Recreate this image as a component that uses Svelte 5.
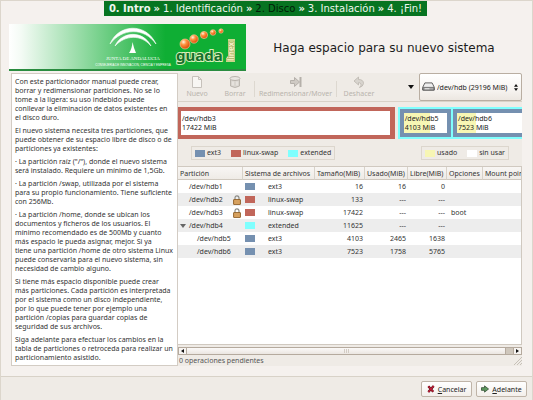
<script>
  const steps = [
    { label: '0. Intro', kind: 'first' },
    { label: '1. Identificación', kind: '' },
    { label: '2. Disco', kind: 'current' },
    { label: '3. Instalación', kind: '' },
    { label: '4. ¡Fin!', kind: '' }
  ];

  const help = [
    ['Con este particionador manual puede crear,', 'borrar y redimensionar particiones. No se lo', 'tome a la ligera: su uso indebido puede', 'conllevar la eliminación de datos existentes en', 'el disco duro.'],
    ['El nuevo sistema necesita tres particiones, que', 'puede obtener de su espacio libre de disco o de', 'particiones ya existentes:'],
    ['· La partición raíz ("/"), donde el nuevo sistema', 'será instalado. Requiere un mínimo de 1,5Gb.'],
    ['· La partición /swap, utilizada por el sistema', 'para su propio funcionamiento. Tiene suficiente', 'con 256Mb.'],
    ['· La partición /home, donde se ubican los', 'documentos y ficheros de los usuarios. El', 'mínimo recomendado es de 500Mb y cuanto', 'más espacio le pueda asignar, mejor. Si ya', 'tiene una partición /home de otro sistema Linux', 'puede conservarla para el nuevo sistema, sin', 'necesidad de cambio alguno.'],
    ['Si tiene más espacio disponible puede crear', 'más particiones. Cada partición es interpretada', 'por el sistema como un disco independiente,', 'por lo que puede tener por ejemplo una', 'partición /copias para guardar copias de', 'seguridad de sus archivos.'],
    ['Siga adelante para efectuar los cambios en la', 'tabla de particiones o retroceda para realizar un', 'particionamiento asistido.']
  ];

  const rows = [
    { dev: '/dev/hdb1', fs: 'ext3', size: '16', used: '16', free: '0' },
    { dev: '/dev/hdb2', fs: 'linux-swap', size: '133', used: '---', free: '---', locked: true },
    { dev: '/dev/hdb3', fs: 'linux-swap', size: '17422', used: '---', free: '---', locked: true, opt: 'boot' },
    { dev: '/dev/hdb4', fs: 'extended', size: '11625', used: '---', free: '---', open: true },
    { dev: '/dev/hdb5', fs: 'ext3', size: '4103', used: '2465', free: '1638', child: true },
    { dev: '/dev/hdb6', fs: 'ext3', size: '7523', used: '1758', free: '5765', child: true }
  ];

  const beads = [
    [10, 19, 5], [19, 14, 4.2], [29, 10, 3.6], [38, 7.500, 2.800], [46, 6, 2.200]
  ];
</script>

<div class="window">
  <main>
    <nav class="steps">
      {#each steps as step, i}
        <span class={step.kind}>{step.label}</span>{#if i < steps.length - 1}<span class="first">»</span>{/if}
      {/each}
    </nav>

    <header>
      <div class="banner">
        <svg class="junta" viewBox="0 0 74 42" role="img" aria-label="Junta de Andalucía">
          <path d="M14 19 C22 -1 50 -3 60 19 C48 2 26 3 14 19Z" fill="#fff" stroke="#fff" stroke-width=".6" />
          <path d="M19 21 C26 6 47 5 55 21 C45 9 29 10 19 21Z" fill="#fff" stroke="#fff" stroke-width=".6" />
          <path d="M36.500 17 Q38 24 40 28 H33 Q36 24 36.500 17Z" fill="#fff" />
          <text x="37" y="35" text-anchor="middle" class="serif">JUNTA DE ANDALUCIA</text>
          <text x="37" y="41" text-anchor="middle" class="tiny">CONSEJERIA DE INNOVACION, CIENCIA Y EMPRESA</text>
        </svg>
        <svg class="guada" viewBox="0 0 62 44" role="img" aria-label="guadalinex">
          <defs>
            <radialGradient id="bead" cx="35%" cy="30%" r="70%">
              <stop offset="0" stop-color="#fff3df" />
              <stop offset="0.400" stop-color="#ff9440" />
              <stop offset="1" stop-color="#dc4a08" />
            </radialGradient>
          </defs>
          {#each beads as [x, y, r]}
            <circle cx={x} cy={y} r={r} fill="url(#bead)" stroke="#ffd1a0" stroke-width="0.600" />
          {/each}
          <text x="1" y="36" class="word">guada</text>
          <rect x="53" y="14" width="7" height="22" fill="#c9d68b" />
          <rect x="51" y="33" width="9" height="4" fill="#c9d68b" />
          <text class="linex" transform="translate(59 36) rotate(-90)">linex</text>
        </svg>
      </div>
      <h1>Haga espacio para su nuevo sistema</h1>
    </header>

    <div class="content">
      <section class="help">
        {#each help as lines}
          <p>{#each lines as line}{line}<br />{/each}</p>
        {/each}
      </section>

      <section class="editor">
        <div class="toolbar">
          <button class="tool nuevo" disabled>
            <svg viewBox="0 0 12 12"><path d="M1.500 .500h6l3 3v8h-9z M7.500 .500v3h3" fill="#f8f6f3" stroke="#c6c1bb" /></svg>
            Nuevo
          </button>
          <button class="tool borrar" disabled>
            <svg viewBox="0 0 12 12"><path d="M1.500 3v7q4.500 3 9 0V3" fill="#d9d5cf" stroke="#bbb6af" /><ellipse cx="6" cy="2.500" rx="5" ry="2" fill="#e9e6e1" stroke="#b7b2ab" /><path d="M4 5.500v4M8 5.500v4" stroke="#f2efeb" /></svg>
            Borrar
          </button>
          <i class="rule"></i>
          <button class="tool mover" disabled>
            <svg viewBox="0 0 12 12"><path d="M.500 4.500h4v-3l5 4.500-5 4.500v-3h-4z" fill="#cfcac4" stroke="#b5b0aa" /><path d="M10.500 1v10" stroke="#b5b0aa" stroke-width="2" /></svg>
            Redimensionar/Mover
          </button>
          <i class="rule"></i>
          <button class="tool deshacer" disabled>
            <svg viewBox="0 0 12 12"><path d="M1 5 5.500 1v2.500q5 0 5 4-.500 3-4 4 2-2 1.500-3.500-.500-1.500-2.500-1.300V9z" fill="#d8d4ce" stroke="#bbb6af" stroke-width=".8" /></svg>
            Deshacer
          </button>
          <button class="more" aria-label="Más herramientas"><svg viewBox="0 0 6 4"><path d="M0 0h6L3 4z" fill="#111" /></svg></button>
          <div class="device">
            <svg class="disk" viewBox="0 0 14 10"><path d="M3 1h8l2.500 5v3h-13V6z" fill="#eee" stroke="#555" stroke-linejoin="round" /><path d="M1 6h12v3H1z" fill="#aaa" stroke="#555" stroke-width=".8" /><path d="M3 7.500h5" stroke="#eee" /></svg>
            <select aria-label="Dispositivo"><option>/dev/hdb (29196 MiB)</option></select>
            <svg class="updown" viewBox="0 0 4 7"><path d="M0 2.800 2 0l2 2.800zM0 4.200 2 7l2-2.800z" fill="#111" /></svg>
          </div>
        </div>

        <div class="map">
          <div class="part swap"><span>/dev/hdb3<br />17422 MiB</span></div>
          <div class="extended">
            <div class="part five"><span>/dev/hdb5<br />4103 MiB</span></div>
            <div class="part six"><span>/dev/hdb6<br />7523 MiB</span></div>
          </div>
        </div>

        <div class="legends">
          <div class="legend">
            <span><i class="sw ext3"></i>ext3</span>
            <span><i class="sw linux-swap"></i>linux-swap</span>
            <span><i class="sw extended-fs"></i>extended</span>
          </div>
          <div class="legend">
            <span><i class="sw used"></i>usado</span>
            <span><i class="sw unused"></i>sin usar</span>
          </div>
        </div>

        <div class="list">
          <table>
            <colgroup>
              <col class="c1" /><col class="c2" /><col class="c3" /><col class="c4" /><col class="c5" /><col class="c6" /><col />
            </colgroup>
            <thead>
              <tr><th>Partición</th><th>Sistema de archivos</th><th>Tamaño(MiB)</th><th>Usado(MiB)</th><th>Libre(MiB)</th><th>Opciones</th><th>Mount point</th></tr>
            </thead>
            <tbody>
              {#each rows as row}
                <tr>
                  <td>
                    <div class="dev" class:child={row.child}>
                      <span class="twist">{#if row.open}<svg viewBox="0 0 6 4"><path d="M0 0h6L3 4z" fill="#666" /></svg>{/if}</span>
                      <span class="name">{row.dev}</span>
                      {#if row.locked}
                        <svg class="lock" viewBox="0 0 8 10"><path d="M2 5V3q0-2.200 2-2.200T6 3v2" fill="none" stroke="#8b8b86" stroke-width="1.200" /><rect x=".5" y="4.500" width="7" height="5" rx=".5" fill="#cf9650" stroke="#8a5a22" stroke-width=".8" /><path d="M1.500 6h5M1.500 8h5" stroke="#e8be83" stroke-width=".6" /></svg>
                      {/if}
                    </div>
                  </td>
                  <td><div class="fs"><i class="sw {row.fs === 'extended' ? 'extended-fs' : row.fs}"></i>{row.fs}</div></td>
                  <td class="num">{row.size}</td>
                  <td class="num">{row.used}</td>
                  <td class="num">{row.free}</td>
                  <td class="opt">{row.opt ?? ''}</td>
                  <td></td>
                </tr>
              {/each}
            </tbody>
          </table>
        </div>

        <div class="scroll">
          <button aria-label="Desplazar a la izquierda"><svg viewBox="0 0 3 4"><path d="M3 0v4L0 2z" fill="#111" /></svg></button>
          <div class="thumb"><i></i><i></i><i></i></div>
          <div class="trough"></div>
          <button aria-label="Desplazar a la derecha"><svg viewBox="0 0 3 4"><path d="M0 0v4l3-2z" fill="#111" /></svg></button>
        </div>
        <div class="status">
          0 operaciones pendientes
          <svg viewBox="0 0 8 8"><path d="M0 8 8 0M3 8l5-5M6 8l2-2" stroke="#bdb6ac" stroke-width=".8" /></svg>
        </div>
      </section>
    </div>
  </main>

  <footer>
    <button>
      <svg viewBox="0 0 9 9"><path d="M1.500 1.500 7 7.500M7.500 1 1.500 8" stroke="#5a0a14" stroke-width="2.600" /><path d="M1.500 1.500 7 7.500M7.500 1 1.500 8" stroke="#c3203a" stroke-width="1.400" /></svg>
      <span><u>C</u>ancelar</span>
    </button>
    <button>
      <svg viewBox="0 0 9 9"><path d="M.500 3h3.500V1l4.500 3.500L4 8V6H.500z" fill="#5f9a60" stroke="#2d4a2f" stroke-width=".9" /></svg>
      <span><u>A</u>delante</span>
    </button>
  </footer>
</div>

<style>
  :global(body) {
    margin: 0;
    background: #f5f1ee;
  }
  .window {
    box-sizing: border-box;
    min-height: 100vh;
    display: flex;
    flex-direction: column;
    border: 1px solid #dcd6cc;
    border-bottom: 0;
    background: #f5f1ee;
    color: #333;
    font: 7px/9px 'Noto Sans', 'DejaVu Sans', sans-serif;
    overflow: hidden;
  }
  button,
  select {
    font: inherit;
    color: inherit;
    margin: 0;
    padding: 0;
    border: 0;
    background: none;
  }
  svg {
    display: block;
    flex: none;
    fill: none;
  }
  main {
    flex: 1;
    display: flex;
    flex-direction: column;
    padding: 0 10px 10px 8px;
  }
  .steps {
    align-self: center;
    display: flex;
    gap: 3px;
    padding: 0 5px;
    background: #077421;
    color: #eef6ee;
    font-family: 'DejaVu Sans', sans-serif;
    font-size: 10px;
    line-height: 15px;
    white-space: nowrap;
  }
  .steps .first {
    font-weight: bold;
  }
  .steps .current {
    color: #001c06;
  }
  header {
    display: flex;
    align-items: center;
    margin-top: 8px;
  }
  .banner {
    box-sizing: border-box;
    width: 237px;
    height: 47px;
    flex: none;
    display: flex;
    justify-content: flex-end;
    align-items: flex-start;
    gap: 5px;
    padding: 1px 9px 0 0;
    border-bottom: 2px solid #2a8c40;
    background: linear-gradient(90deg, #fff 0%, #f4fbf5 5%, #0fae34 66%);
  }
  .junta {
    width: 74px;
    height: 42px;
    overflow: visible;
  }
  .guada {
    width: 62px;
    height: 44px;
    overflow: visible;
  }
  .serif {
    font: 5px 'Liberation Serif', serif;
    fill: #fff;
  }
  .tiny {
    font: 3px 'Liberation Sans', sans-serif;
    fill: #fff;
  }
  .word {
    font: bold 15px 'Noto Sans', sans-serif;
    fill: #15722c;
    stroke: #d9efb9;
    stroke-width: 2px;
    paint-order: stroke;
  }
  .linex {
    font: bold 8px 'Noto Sans', sans-serif;
    fill: #f4f0c8;
    stroke: #a8ae60;
    stroke-width: 1px;
    paint-order: stroke;
  }
  h1 {
    flex: 1;
    margin: 0;
    text-align: center;
    font-family: 'DejaVu Sans', sans-serif;
    font-size: 12px;
    line-height: 16px;
    font-weight: normal;
    color: #1c1c1c;
  }
  .content {
    flex: 1;
    display: flex;
    margin: 2px 0 0 2px;
  }
  .help {
    flex: none;
    box-sizing: border-box;
    width: 167px;
    padding: 3px 0 2px 3px;
    border: 1px solid #d3ccc4;
    background: #fff;
    white-space: nowrap;
  }
  .help p {
    margin: 0 0 4px;
  }
  .help p:last-child {
    margin: 0;
  }
  .editor {
    flex: 1;
    min-width: 0;
    display: flex;
    flex-direction: column;
    background: #efebe6;
  }
  .toolbar {
    display: flex;
    height: 28px;
    border-bottom: 1px solid #d8d2c8;
    color: #b9b4ad;
  }
  .tool {
    display: flex;
    flex-direction: column;
    align-items: center;
    justify-content: center;
    gap: 1px;
    flex: none;
    white-space: nowrap;
  }
  .tool svg {
    width: 12px;
    height: 12px;
  }
  .nuevo,
  .borrar {
    width: 38px;
  }
  .mover {
    width: 81px;
  }
  .deshacer {
    width: 44px;
  }
  .rule {
    width: 1px;
    margin: 8px 0 4px;
    background: #ddd8d0;
  }
  .more {
    margin-left: auto;
    padding: 0 5px;
  }
  .more svg {
    width: 6px;
    height: 4px;
  }
  .device {
    position: relative;
    width: 103px;
    flex: none;
  }
  .device select {
    box-sizing: border-box;
    width: 100%;
    height: 28px;
    padding: 0 8px 0 17px;
    border: 1px solid #b9aea2;
    border-radius: 2px;
    appearance: none;
    background: linear-gradient(#fff, #f7f4f1 60%, #ece7e1);
    color: #222;
  }
  .disk {
    position: absolute;
    left: 3px;
    top: 9px;
    width: 13px;
    height: 9px;
  }
  .updown {
    position: absolute;
    right: 4px;
    top: 11px;
    width: 4px;
    height: 7px;
  }
  .map {
    display: flex;
    gap: 3px;
    height: 32px;
    margin-top: 5px;
    overflow: hidden;
    white-space: nowrap;
    color: #222;
  }
  .part {
    box-sizing: border-box;
    display: flex;
    align-items: center;
    border: 4px solid #7590b0;
    background: #fff;
  }
  .part span {
    padding-left: 1px;
  }
  .swap {
    flex: none;
    width: 63%;
    border: 5px solid #c1665a;
    border-width: 4px 5px 4px 3px;
  }
  .extended {
    flex: 1;
    min-width: 0;
    display: flex;
    gap: 2px;
    box-sizing: border-box;
    border: 2px solid #7ffffe;
    border-right: 0;
    background: #7ffffe;
  }
  .five {
    flex: none;
    width: 42%;
    background: linear-gradient(90deg, #f7f6b4 60%, #fff 60%);
  }
  .six {
    flex: 1;
    border-right: 0;
    background: linear-gradient(90deg, #f7f6b4 30%, #fff 30%);
  }
  .legends {
    display: flex;
    justify-content: space-between;
    padding: 7px 13px 6px;
  }
  .legend {
    display: flex;
    gap: 10px;
    padding: 1px 3px;
    border: 1px solid #dcd6cd;
    line-height: 10px;
  }
  .legend span {
    display: flex;
    align-items: center;
    gap: 2px;
  }
  .sw {
    width: 10px;
    height: 7px;
    flex: none;
  }
  .ext3 {
    background: #7590b0;
  }
  .linux-swap {
    background: #c1665a;
  }
  .extended-fs {
    background: #7ffffe;
  }
  .used {
    background: #f7f6b4;
  }
  .unused {
    background: #fff;
  }
  .list {
    flex: 1;
    overflow: hidden;
    border: solid #d0c9c0;
    border-width: 1px 1px 1px 0;
    background: #fff;
  }
  table {
    width: 100%;
    table-layout: fixed;
    border-collapse: separate;
    border-spacing: 0;
    white-space: nowrap;
  }
  .c1 { width: 65px; }
  .c2 { width: 72px; }
  .c3 { width: 50px; }
  .c4 { width: 43px; }
  .c5 { width: 39px; }
  .c6 { width: 36px; }
  th,
  td {
    box-sizing: border-box;
    height: 13px;
    padding: 0 2px;
    font-weight: normal;
    text-align: left;
  }
  th {
    padding-right: 0;
    border-right: 1px solid #d8d2c9;
    border-bottom: 1px solid #cfc8be;
    background: linear-gradient(#f8f6f4, #efebe6);
  }
  th:last-child {
    border-right: 0;
  }
  tbody tr:nth-child(even) {
    background: #ededed;
  }
  .num {
    text-align: right;
  }
  .opt {
    padding-left: 4px;
  }
  .dev {
    display: flex;
    align-items: center;
  }
  .twist {
    width: 9px;
  }
  .twist svg {
    width: 6px;
    height: 4px;
  }
  .child .twist {
    width: 17px;
  }
  .lock {
    width: 8px;
    height: 10px;
    margin-left: auto;
  }
  .fs {
    display: flex;
    align-items: center;
    gap: 13px;
  }
  .scroll {
    display: flex;
    height: 8px;
    margin-top: 2px;
    box-sizing: border-box;
    border: 1px solid #b5aa9e;
    background: #f7f4f1;
  }
  .scroll button {
    width: 7px;
    display: flex;
    align-items: center;
    justify-content: center;
  }
  .scroll button svg {
    width: 3px;
    height: 4px;
  }
  .thumb {
    flex: 1;
    display: flex;
    align-items: center;
    justify-content: center;
    gap: 1px;
    border: solid #b5aa9e;
    border-width: 0 1px;
    background: linear-gradient(#fbf9f8, #ebe6e1);
  }
  .thumb i {
    width: 1px;
    height: 4px;
    background: #d3ccc4;
  }
  .trough {
    width: 7px;
    border-right: 1px solid #b5aa9e;
    background: #cfc7bc;
  }
  .status {
    display: flex;
    justify-content: space-between;
    align-items: center;
    height: 11px;
    padding-left: 1px;
    color: #555;
  }
  .status svg {
    width: 8px;
    height: 8px;
  }
  footer {
    display: flex;
    justify-content: flex-end;
    gap: 4px;
    padding: 4px 5px 3px;
    border-top: 1px solid #d8d2c8;
    background: #efebe6;
  }
  footer button {
    box-sizing: border-box;
    width: 51px;
    height: 16px;
    display: flex;
    align-items: center;
    justify-content: center;
    gap: 3px;
    border: 1px solid #bfb4a8;
    border-radius: 2px;
    background: linear-gradient(#fff, #f3efeb);
    color: #222;
  }
  footer svg {
    width: 8px;
    height: 8px;
  }
</style>
